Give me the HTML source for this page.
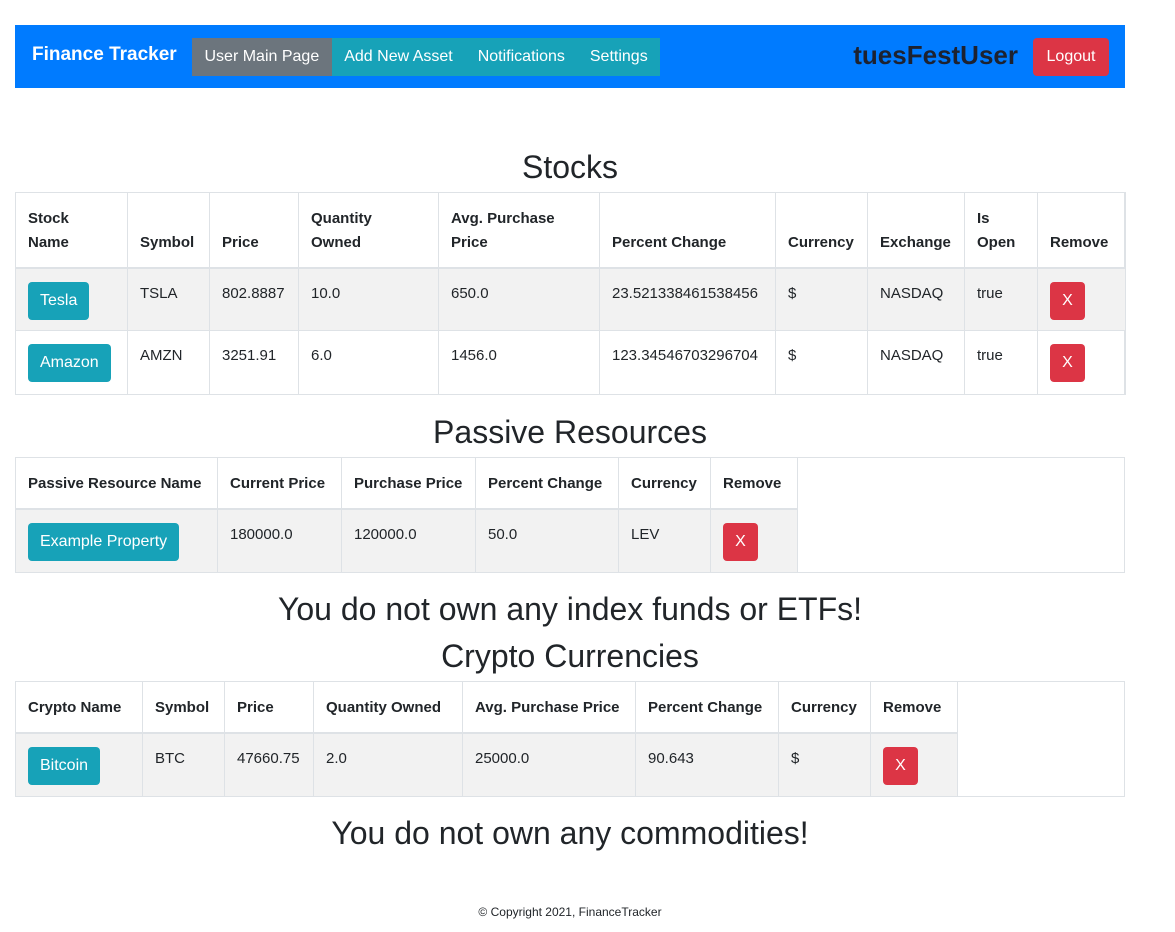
<!DOCTYPE html>
<html><head><meta charset="utf-8"><style>
*{box-sizing:border-box;margin:0;padding:0}
body{width:1175px;height:932px;background:#fff;font-family:"Liberation Sans",sans-serif;color:#212529;position:relative;overflow:hidden;font-size:15px}
.nav{position:absolute;left:15px;top:25px;width:1110px;height:63px;background:#007bff}
.brand{position:absolute;left:17px;top:19px;color:#fff;font-weight:bold;font-size:19px}
.grp{position:absolute;left:177px;top:13px;height:38px;display:flex;background:#17a2b8}
.grp div{color:#fff;font-size:16px;line-height:38px;padding:0 12.5px}
.grp .act{background:#6c757d}
.user{position:absolute;right:107px;top:15px;font-weight:bold;font-size:26px;color:#1d2230}
.logout{position:absolute;left:1018px;top:13px;width:76px;height:38px;background:#dc3545;color:#fff;border-radius:4px;font-size:16px;line-height:38px;text-align:center}
h2{position:absolute;left:0;width:1140px;text-align:center;font-weight:500;font-size:32px;line-height:36px}
.frame{position:absolute;left:15px;width:1110px;border:1px solid #dee2e6}
table{border-collapse:collapse;table-layout:fixed}
td,th{border:1px solid #dee2e6;padding:0 12px;text-align:left;vertical-align:top;font-size:15px}
th{font-weight:bold;vertical-align:bottom;border-bottom:2px solid #dee2e6;line-height:24px;padding-bottom:12px}
tbody tr.g td{background:#f2f2f2}
td{padding-top:14px;line-height:22px}
.b{display:inline-block;background:#17a2b8;color:#fff;border-radius:4px;height:38px;line-height:38px;padding:0 12px;font-size:16px;margin-top:-1px}
.x{display:inline-block;background:#dc3545;color:#fff;border-radius:4px;height:38px;width:35px;line-height:38px;text-align:center;font-size:16px;margin-top:-1px}
.foot{position:absolute;left:0;width:1140px;top:905px;text-align:center;font-size:12px}
</style></head><body>
<div class="nav">
<div class="brand">Finance Tracker</div>
<div class="grp"><div class="act">User Main Page</div><div>Add New Asset</div><div>Notifications</div><div>Settings</div></div>
<div class="user">tuesFestUser</div>
<div class="logout">Logout</div>
</div>

<h2 style="top:149px">Stocks</h2>
<div class="frame" style="top:192px;height:203px">
<table style="width:1110px;margin:-1px">
<colgroup><col style="width:112px"><col style="width:82px"><col style="width:89px"><col style="width:140px"><col style="width:161px"><col style="width:176px"><col style="width:92px"><col style="width:97px"><col style="width:73px"><col style="width:88px"></colgroup>
<tr style="height:75px"><th>Stock<br>Name</th><th>Symbol</th><th>Price</th><th>Quantity<br>Owned</th><th>Avg. Purchase<br>Price</th><th>Percent Change</th><th>Currency</th><th>Exchange</th><th>Is<br>Open</th><th>Remove</th></tr>
<tr class="g" style="height:63px"><td><span class="b">Tesla</span></td><td>TSLA</td><td>802.8887</td><td>10.0</td><td>650.0</td><td>23.521338461538456</td><td>$</td><td>NASDAQ</td><td>true</td><td><span class="x">X</span></td></tr>
<tr style="height:64px"><td><span class="b">Amazon</span></td><td>AMZN</td><td>3251.91</td><td>6.0</td><td>1456.0</td><td>123.34546703296704</td><td>$</td><td>NASDAQ</td><td>true</td><td><span class="x">X</span></td></tr>
</table></div>

<h2 style="top:414px">Passive Resources</h2>
<div class="frame" style="top:457px;height:116px">
<table style="width:783px;margin:-1px">
<colgroup><col style="width:202px"><col style="width:124px"><col style="width:134px"><col style="width:143px"><col style="width:92px"><col style="width:87px"></colgroup>
<tr style="height:51px"><th>Passive Resource Name</th><th>Current Price</th><th>Purchase Price</th><th>Percent Change</th><th>Currency</th><th>Remove</th></tr>
<tr class="g" style="height:64px"><td><span class="b">Example Property</span></td><td>180000.0</td><td>120000.0</td><td>50.0</td><td>LEV</td><td><span class="x">X</span></td></tr>
</table></div>

<h2 style="top:591px">You do not own any index funds or ETFs!</h2>
<h2 style="top:638px">Crypto Currencies</h2>
<div class="frame" style="top:681px;height:116px">
<table style="width:942px;margin:-1px">
<colgroup><col style="width:127px"><col style="width:82px"><col style="width:89px"><col style="width:149px"><col style="width:173px"><col style="width:143px"><col style="width:92px"><col style="width:87px"></colgroup>
<tr style="height:51px"><th>Crypto Name</th><th>Symbol</th><th>Price</th><th>Quantity Owned</th><th>Avg. Purchase Price</th><th>Percent Change</th><th>Currency</th><th>Remove</th></tr>
<tr class="g" style="height:64px"><td><span class="b">Bitcoin</span></td><td>BTC</td><td>47660.75</td><td>2.0</td><td>25000.0</td><td>90.643</td><td>$</td><td><span class="x">X</span></td></tr>
</table></div>

<h2 style="top:815px">You do not own any commodities!</h2>
<div class="foot">© Copyright 2021, FinanceTracker</div>
</body></html>
